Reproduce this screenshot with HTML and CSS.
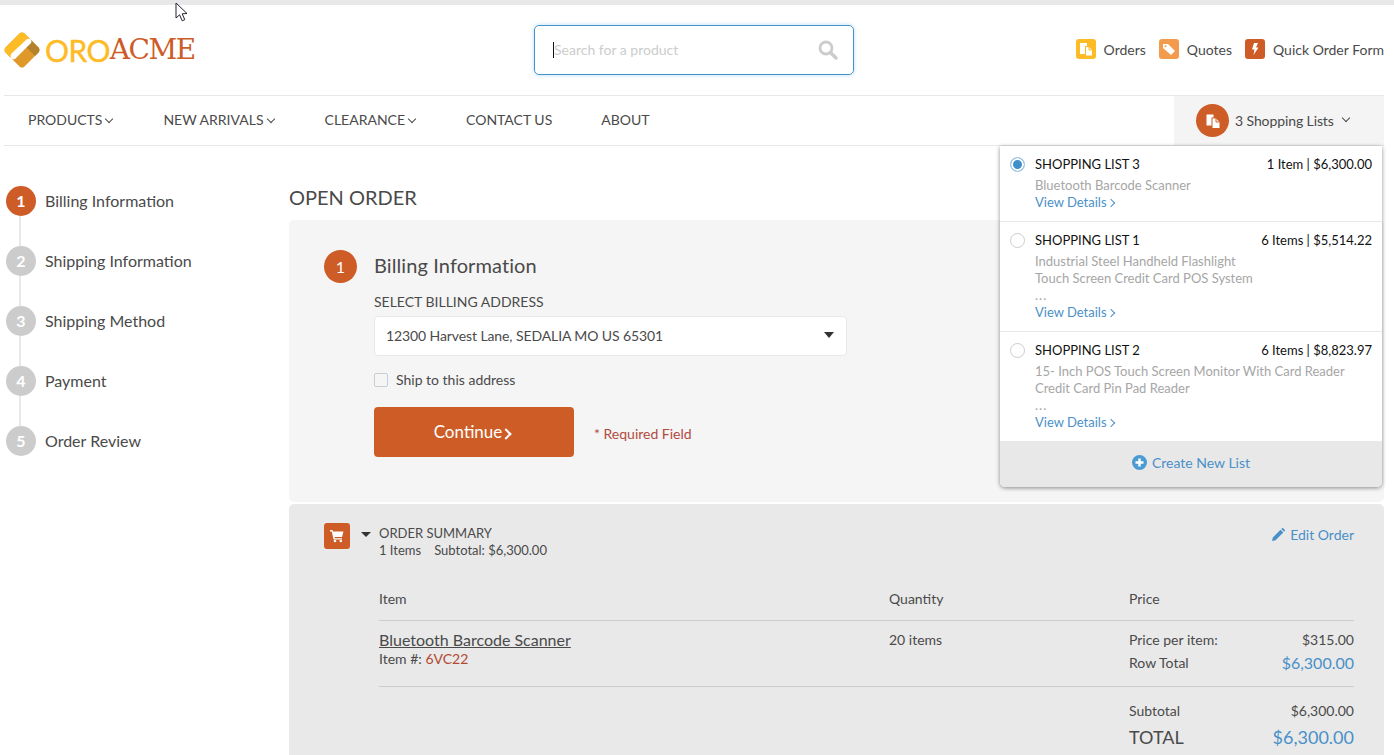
FILE: index.html
```html
<!DOCTYPE html>
<html lang="en">
<head>
  <meta charset="UTF-8">
  <title>Open Order - OroAcme</title>
  <link rel="stylesheet" href="styles.css">
</head>
<body>
<div class="topline"></div>
<svg class="cursor" width="14" height="20" viewBox="0 0 14 20"><path d="M1 1v15l3.600-3.200 2.600 6 2.600-1.100-2.600-5.900 4.800-.3z" fill="#fff" stroke="#223" stroke-width="1"/></svg>

<header class="header">
  <a class="logo">
    <svg width="36" height="36" viewBox="0 0 36 36">
      <path d="M1 16 16 1q2-1 4 0l15 15q1 2 0 4L20 35q-2 1-4 0L1 20q-1-2 0-4z" fill="#e0982a"/>
      <path d="M1 16 16 1q2-1 4 0l5 5L6 25l-5-5q-1-2 0-4z" fill="#fdbb25"/>
      <path d="M27 8l8 8q1 2 0 4l-4 4-9-9z" fill="#b5822c"/>
      <path d="M7 22 23 7q3-1 4 1t0 3L11 27q-3 1-4-1t0-4z" fill="#fff"/>
    </svg>
    <span class="logo-oro">ORO</span><span class="logo-acme">ACME</span>
  </a>
  <div class="search">
    <span class="caret"></span>
    <span class="placeholder">Search for a product</span>
    <svg width="20" height="20" viewBox="0 0 20 20"><circle cx="8" cy="8" r="6" fill="none" stroke="#ccc" stroke-width="2.800"/><path d="M12.500 12.500 18 18" stroke="#ccc" stroke-width="3.400" stroke-linecap="round"/></svg>
  </div>
  <nav class="quick">
    <a><span class="qicon yellow"><svg width="14" height="14" viewBox="0 0 14 14"><path d="M1 1h7v3H6v8H1z" fill="#fff"/><path d="M7 5h3l3 3v5.500H7z" fill="#fff"/><path d="M10 5v3h3" fill="none" stroke="#fdbb25"/></svg></span>Orders</a>
    <a><span class="qicon peach"><svg width="14" height="14" viewBox="0 0 14 14"><path d="M1 2h5l7 7-4 4-8-7z" fill="#fff"/><circle cx="3.500" cy="4.200" r="1" fill="#f29a4d"/></svg></span>Quotes</a>
    <a><span class="qicon rust"><svg width="14" height="14" viewBox="0 0 14 14"><path d="M6 1h4L8 5.500h2.500L5.500 13l1-5.500H4z" fill="#fff"/></svg></span>Quick Order Form</a>
  </nav>
</header>

<div class="navbar">
  <ul class="menu">
    <li class="has-sub">PRODUCTS<i class="chev"></i></li>
    <li class="has-sub">NEW ARRIVALS<i class="chev"></i></li>
    <li class="has-sub">CLEARANCE<i class="chev"></i></li>
    <li>CONTACT US</li>
    <li>ABOUT</li>
  </ul>
  <div class="lists-toggle">
    <span class="lists-icon"><svg width="16" height="16" viewBox="0 0 16 16"><path d="M1.500 1.500h7v3H6.500v8h-5z" fill="#fff"/><path d="M7.500 5.500h3.500l3.500 3.500v6h-7z" fill="#fff"/><path d="M11 5.500V9h3.500" fill="none" stroke="#cd5c26"/></svg></span>
    <span class="lists-label">3 Shopping Lists</span><i class="chev chev-wide"></i>
  </div>
</div>

<div class="dropdown">
  <div class="list-row">
    <span class="radio checked"></span>
    <div class="list-body">
      <div class="list-head"><span>SHOPPING LIST 3</span><span>1 Item | $6,300.00</span></div>
      <div class="list-items">Bluetooth Barcode Scanner</div>
      <a class="details">View Details<i class="next"></i></a>
    </div>
  </div>
  <div class="list-row">
    <span class="radio"></span>
    <div class="list-body">
      <div class="list-head"><span>SHOPPING LIST 1</span><span>6 Items | $5,514.22</span></div>
      <div class="list-items">Industrial Steel Handheld Flashlight</div>
      <div class="list-items">Touch Screen Credit Card POS System</div>
      <div class="list-items dots">...</div>
      <a class="details">View Details<i class="next"></i></a>
    </div>
  </div>
  <div class="list-row">
    <span class="radio"></span>
    <div class="list-body">
      <div class="list-head"><span>SHOPPING LIST 2</span><span>6 Items | $8,823.97</span></div>
      <div class="list-items">15- Inch POS Touch Screen Monitor With Card Reader</div>
      <div class="list-items">Credit Card Pin Pad Reader</div>
      <div class="list-items dots">...</div>
      <a class="details">View Details<i class="next"></i></a>
    </div>
  </div>
  <a class="create">
    <svg width="15" height="15" viewBox="0 0 15 15"><circle cx="7.500" cy="7.500" r="7.500" fill="#4a9bd1"/><path d="M7.500 3.500v8M3.500 7.500h8" stroke="#fff" stroke-width="2.400"/></svg>
    Create New List
  </a>
</div>

<div class="page">
  <ol class="steps">
    <li class="step active"><span class="num">1</span>Billing Information</li>
    <li class="step"><span class="num">2</span>Shipping Information</li>
    <li class="step"><span class="num">3</span>Shipping Method</li>
    <li class="step"><span class="num">4</span>Payment</li>
    <li class="step"><span class="num">5</span>Order Review</li>
  </ol>

  <main class="content">
    <h1>OPEN ORDER</h1>
    <section class="panel billing">
      <span class="bignum">1</span>
      <div class="billing-form">
        <h2>Billing Information</h2>
        <label class="field-label">SELECT BILLING ADDRESS</label>
        <div class="select">12300 Harvest Lane, SEDALIA MO US 65301<i class="select-arrow"></i></div>
        <label class="ship"><span class="checkbox"></span>Ship to this address</label>
        <div class="actions">
          <button class="continue">Continue<i class="next next-big"></i></button>
          <span class="required">* Required Field</span>
        </div>
      </div>
    </section>

    <section class="panel summary">
      <div class="summary-top">
        <span class="cart"><svg width="14" height="14" viewBox="0 0 14 14"><path d="M0 1h2.500l.5 1.500h10.500L12 8H4.500l.3 1.200H12v1.300H3.500L1.800 2.500H0z" fill="#fff"/><circle cx="5" cy="12" r="1.300" fill="#fff"/><circle cx="10.800" cy="12" r="1.300" fill="#fff"/></svg></span>
        <i class="tri"></i>
        <div class="summary-title">
          <div>ORDER SUMMARY</div>
          <div class="summary-sub"><span>1 Items</span><span>Subtotal: $6,300.00</span></div>
        </div>
        <a class="edit"><svg width="13" height="13" viewBox="0 0 13 13"><path d="M0 13l.8-3.600L8.500 1.700l2.800 2.800-7.700 7.700zM9.300.9l.7-.6q.6-.5 1.200 0l1.500 1.500q.5.600 0 1.200l-.6.700z" fill="#4a90c8"/></svg>Edit Order</a>
      </div>
      <div class="order-table">
        <div class="row head">
          <div class="col-item">Item</div>
          <div class="col-qty">Quantity</div>
          <div class="col-price">Price</div>
        </div>
        <div class="row item-row">
          <div class="col-item">
            <a class="item-name">Bluetooth Barcode Scanner</a>
            <div class="item-no">Item #: <span>6VC22</span></div>
          </div>
          <div class="col-qty">20 items</div>
          <div class="col-price prices">
            <div class="price-line"><span>Price per item:</span><span>$315.00</span></div>
            <div class="price-line total-line"><span>Row Total</span><b>$6,300.00</b></div>
          </div>
        </div>
        <div class="row totals">
          <div class="col-item"></div>
          <div class="col-qty"></div>
          <div class="col-price">
            <div class="price-line"><span>Subtotal</span><span>$6,300.00</span></div>
            <div class="price-line grand"><span>TOTAL</span><b>$6,300.00</b></div>
          </div>
        </div>
      </div>
    </section>
  </main>
</div>
</body>
</html>
```

FILE: styles.css
```css
html, body {
    height: 755px;
    overflow: hidden;
}
body {
    margin: 0;
    font-family: Lato, "Open Sans", sans-serif;
    font-size: 14px;
    color: #4a4a4a;
    background-color: #ffffff;
    position: relative;
}
a {
    text-decoration: none;
}
ul, ol {
    list-style: none;
    margin: 0;
    padding: 0;
}
i {
    font-style: normal;
}
.topline {
    height: 5px;
    background-color: #e8e8e8;
}
.cursor {
    position: absolute;
    left: 175px;
    top: 2px;
    z-index: 5;
}

/* header */
.header {
    height: 90px;
    margin: 0 10px 0 4px;
    display: grid;
    grid-template-columns: 530px 320px 1fr;
    align-items: center;
}
.logo {
    display: flex;
    align-items: center;
    height: 36px;
}
.logo svg {
    margin-right: 5px;
}
.logo-oro {
    font-size: 30px;
    color: #fdbb25;
    letter-spacing: -0.6px;
    line-height: 36px;
    -webkit-text-stroke: 0.4px #fdbb25;
}
.logo-acme {
    font-family: "DejaVu Serif", serif;
    font-size: 28px;
    color: #cd5c26;
    letter-spacing: -1.500px;
    line-height: 36px;
    font-weight: 400;
}
.search {
    height: 48px;
    border: 1px solid #4095cf;
    border-radius: 5px;
    box-shadow: 0 0 4px rgba(64, 149, 207, 0.35);
    display: flex;
    align-items: center;
    padding: 0 15px 0 18px;
}
.caret {
    width: 1px;
    height: 16px;
    background-color: #111;
}
.placeholder {
    flex: 1;
    color: #cccccc;
    padding-bottom: 2px;
}
.quick {
    display: flex;
    justify-content: flex-end;
    gap: 13px;
    padding-bottom: 2px;
}
.quick a {
    display: flex;
    align-items: center;
    color: #4a4a4a;
}
.qicon {
    width: 20px;
    height: 20px;
    border-radius: 3px;
    margin-right: 8px;
    display: flex;
    align-items: center;
    justify-content: center;
}
.yellow { background-color: #fdbb25; }
.peach { background-color: #f29a4d; }
.rust { background-color: #cd5c26; }

/* navigation */
.navbar {
    height: 49px;
    margin: 0 10px 0 4px;
    border-top: 1px solid #e8e8e8;
    border-bottom: 1px solid #e8e8e8;
    display: flex;
    justify-content: space-between;
}
.menu {
    display: flex;
    align-items: center;
    padding: 0 0 2px 24px;
}
.menu li {
    margin-right: 49px;
    color: #4a4a4a;
}
.menu li.has-sub {
    margin-right: 51px;
}
.chev {
    display: inline-block;
    width: 5px;
    height: 5px;
    border-right: 1px solid #4a4a4a;
    border-bottom: 1px solid #4a4a4a;
    transform: rotate(45deg);
    margin-left: 4px;
    position: relative;
    top: -3px;
}
.chev-wide {
    margin-left: 9px;
}
.lists-toggle {
    width: 210px;
    box-sizing: border-box;
    background-color: #f4f4f4;
    display: flex;
    align-items: center;
    padding-left: 22px;
}
.lists-label {
    letter-spacing: -0.1px;
}
.lists-icon {
    width: 33px;
    height: 33px;
    border-radius: 50%;
    background-color: #cd5c26;
    display: flex;
    align-items: center;
    justify-content: center;
    margin-right: 6px;
}

/* shopping lists dropdown */
.dropdown {
    position: absolute;
    left: 1000px;
    top: 146px;
    width: 382px;
    background-color: #ffffff;
    border-radius: 0 0 5px 5px;
    box-shadow: 0 1px 4px rgba(0, 0, 0, 0.45);
    z-index: 3;
    overflow: hidden;
    font-size: 13px;
}
.list-row {
    display: flex;
    padding: 10px 10px 10px 10px;
    border-bottom: 1px solid #e8e8e8;
}
.list-row:nth-child(3) {
    border-bottom: none;
}
.radio {
    width: 13px;
    height: 13px;
    border: 1px solid #cccccc;
    border-radius: 50%;
    margin: 1px 10px 0 0;
    flex-shrink: 0;
    background-color: #fff;
}
.radio.checked {
    background-color: #3f8fc8;
    box-shadow: inset 0 0 0 2px #fff;
    border-color: #a9cbe4;
}
.list-body {
    flex: 1;
    line-height: 17px;
}
.list-head {
    display: flex;
    justify-content: space-between;
    color: #111111;
    margin-bottom: 4px;
}
.list-items {
    color: #a6a6a6;
}
.dots {
    letter-spacing: 1px;
}
.details {
    color: #4a90c8;
    display: block;
}
.next {
    display: inline-block;
    width: 5px;
    height: 5px;
    border-right: 1px solid currentColor;
    border-top: 1px solid currentColor;
    transform: rotate(45deg);
    margin-left: 1px;
    position: relative;
    top: -1px;
}
.create {
    height: 42px;
    padding-bottom: 4px;
    background-color: #e8e8e8;
    color: #4a90c8;
    display: flex;
    align-items: center;
    justify-content: center;
    gap: 5px;
    font-size: 14px;
}

/* page columns */
.page {
    display: flex;
    margin: 0 10px 0 4px;
}
.steps {
    width: 285px;
    flex-shrink: 0;
    padding: 40px 0 0 2px;
    box-sizing: border-box;
}
.step {
    height: 60px;
    display: flex;
    align-items: flex-start;
    font-size: 16px;
    line-height: 30px;
    position: relative;
    box-sizing: border-box;
}
.step:not(:last-child)::after {
    content: "";
    position: absolute;
    left: 13px;
    top: 30px;
    width: 2px;
    height: 30px;
    background-color: #e8e8e8;
}
.num {
    width: 30px;
    height: 30px;
    border-radius: 50%;
    background-color: #cccccc;
    color: #ffffff;
    font-weight: 700;
    font-size: 16px;
    text-align: center;
    margin-right: 9px;
}
.step.active .num {
    background-color: #cd5c26;
}
.content {
    flex: 1;
    min-width: 0;
}
h1 {
    margin: 0;
    font-size: 20px;
    font-weight: 400;
    line-height: 24px;
    height: 74px;
    padding-top: 39px;
    box-sizing: border-box;
    color: #4a4a4a;
}
.panel {
    border-radius: 5px;
}
.billing {
    height: 282px;
    background-color: #f5f5f5;
    display: flex;
    padding: 30px 0 0 35px;
    box-sizing: border-box;
}
.bignum {
    width: 33px;
    height: 33px;
    border-radius: 50%;
    background-color: #cd5c26;
    color: #fff;
    font-size: 16px;
    line-height: 33px;
    text-align: center;
    margin-right: 17px;
}
.billing-form {
    width: 473px;
}
h2 {
    margin: 0;
    font-size: 20px;
    font-weight: 400;
    line-height: 31px;
    letter-spacing: 0.1px;
}
.field-label {
    display: block;
    margin-top: 12px;
    line-height: 17px;
}
.select {
    height: 40px;
    margin-top: 6px;
    background-color: #ffffff;
    border: 1px solid #e8e8e8;
    border-radius: 4px;
    box-sizing: border-box;
    padding: 0 12px 2px 11px;
    display: flex;
    align-items: center;
    justify-content: space-between;
    color: #4a4a4a;
    letter-spacing: -0.1px;
}
.select-arrow {
    width: 0;
    height: 0;
    border-left: 5px solid transparent;
    border-right: 5px solid transparent;
    border-top: 6px solid #333;
}
.ship {
    display: flex;
    align-items: center;
    margin-top: 15px;
    line-height: 17px;
}
.checkbox {
    width: 12px;
    height: 12px;
    border: 1px solid #c9ced3;
    border-radius: 2px;
    background-color: #f5f5f5;
    margin: 0 8px 0 0;
}
.actions {
    display: flex;
    align-items: center;
    margin-top: 19px;
}
.continue {
    width: 200px;
    height: 50px;
    padding: 0 4px 2px 0;
    background-color: #cd5c26;
    color: #fff;
    border: none;
    border-radius: 4px;
    font-family: inherit;
    font-size: 17px;
}
.next-big {
    width: 6px;
    height: 6px;
    border-width: 2px;
    margin-left: 0;
    top: 0;
}
.required {
    margin-left: 20px;
    color: #b24a42;
    position: relative;
    top: 1px;
}
.summary {
    margin-top: 2px;
    height: 400px;
    background-color: #e9e9e9;
    padding: 19px 30px 0 35px;
    box-sizing: border-box;
}
.summary-top {
    display: flex;
    align-items: flex-start;
}
.cart {
    width: 26px;
    height: 26px;
    border-radius: 3px;
    background-color: #cd5c26;
    display: flex;
    align-items: center;
    justify-content: center;
}
.tri {
    width: 0;
    height: 0;
    margin: 9px 8px 0 11px;
    border-left: 5px solid transparent;
    border-right: 5px solid transparent;
    border-top: 5px solid #333;
}
.summary-title {
    flex: 1;
    line-height: 17px;
    margin-top: 2px;
    font-size: 13px;
}
.summary-sub {
    display: flex;
    gap: 13px;
}
.edit {
    color: #4a90c8;
    display: flex;
    align-items: center;
    gap: 5px;
    margin-top: 3px;
}
.order-table {
    margin-left: 55px;
    margin-top: 31px;
}
.row {
    display: flex;
}
.col-item {
    width: 510px;
}
.col-qty {
    width: 240px;
}
.col-price {
    flex: 1;
}
.head {
    padding-bottom: 13px;
    border-bottom: 1px solid #cccccc;
    line-height: 17px;
}
.item-row {
    padding: 9px 0 12px;
    border-bottom: 1px solid #cccccc;
    line-height: 20px;
}
.prices {
    margin-top: -2px;
}
.item-name {
    color: #4a4a4a;
    font-size: 16px;
    text-decoration: underline;
    line-height: 20px;
    display: block;
}
.item-no {
    line-height: 17px;
}
.item-no span {
    color: #b24a32;
}
.price-line {
    display: flex;
    justify-content: space-between;
    align-items: center;
    line-height: 23px;
}
.price-line b {
    font-weight: 400;
    font-size: 16px;
    color: #4a90c8;
}
.totals {
    padding-top: 12px;
}
.grand {
    font-size: 18px;
    line-height: 30px;
}
.grand b {
    font-size: 18px;
}
```
